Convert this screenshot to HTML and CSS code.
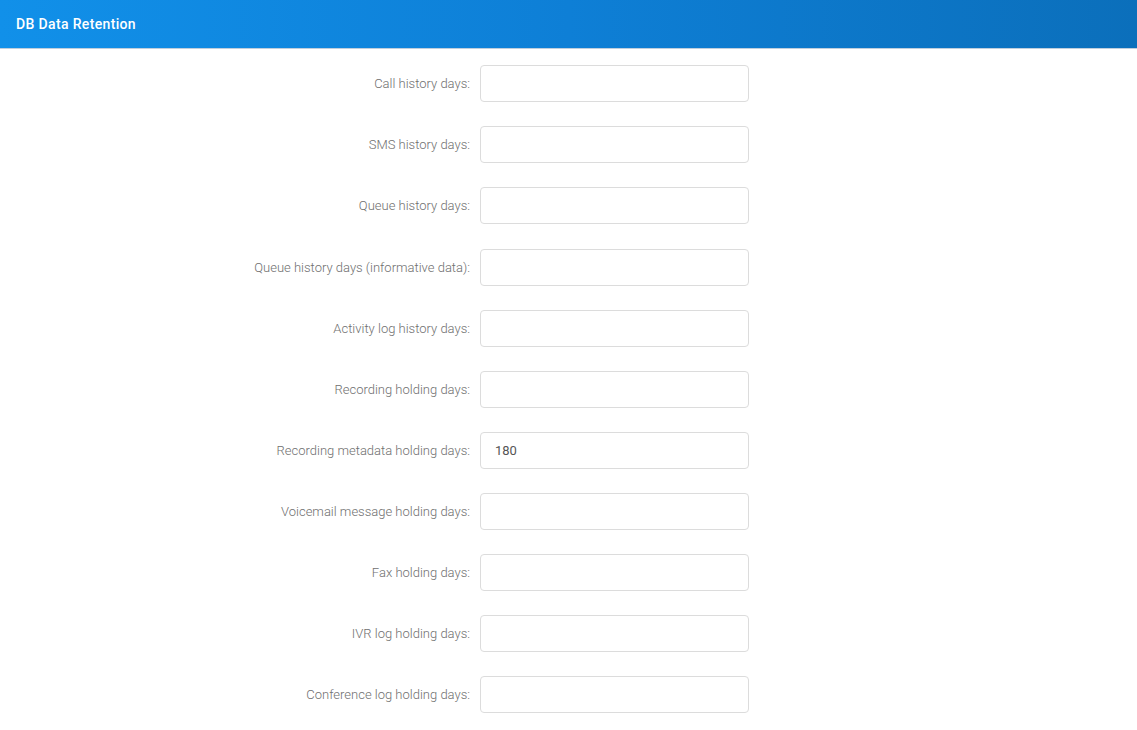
FILE: index.html
```html
<!DOCTYPE html>
<html lang="en">
<head>
<meta charset="utf-8">
<title>DB Data Retention</title>
<link rel="stylesheet" href="styles.css">
</head>
<body>
<header class="panel-header">
  <h1 class="panel-title">DB Data Retention</h1>
</header>
<form class="retention-form">
  <label class="field-label" for="f-call">Call history days:</label>
  <input class="field-input" id="f-call" type="text">

  <label class="field-label" for="f-sms">SMS history days:</label>
  <input class="field-input" id="f-sms" type="text">

  <label class="field-label" for="f-queue">Queue history days:</label>
  <input class="field-input" id="f-queue" type="text">

  <label class="field-label" for="f-queue-info">Queue history days (informative data):</label>
  <input class="field-input" id="f-queue-info" type="text">

  <label class="field-label" for="f-activity">Activity log history days:</label>
  <input class="field-input" id="f-activity" type="text">

  <label class="field-label" for="f-rec">Recording holding days:</label>
  <input class="field-input" id="f-rec" type="text">

  <label class="field-label" for="f-rec-meta">Recording metadata holding days:</label>
  <input class="field-input" id="f-rec-meta" type="text" value="180">

  <label class="field-label" for="f-vm">Voicemail message holding days:</label>
  <input class="field-input" id="f-vm" type="text">

  <label class="field-label" for="f-fax">Fax holding days:</label>
  <input class="field-input" id="f-fax" type="text">

  <label class="field-label" for="f-ivr">IVR log holding days:</label>
  <input class="field-input" id="f-ivr" type="text">

  <label class="field-label" for="f-conf">Conference log holding days:</label>
  <input class="field-input" id="f-conf" type="text">
</form>
</body>
</html>
```

FILE: styles.css
```css
html, body {
  margin: 0;
  padding: 0;
  background: #ffffff;
  font-family: Roboto, "Liberation Sans", Arial, sans-serif;
}

.panel-header {
  height: 48px;
  display: flex;
  align-items: center;
  padding: 0 16px;
  background: linear-gradient(90deg, #1190e9 0%, #0e7fd6 50%, #0b6fbb 100%);
  box-shadow: 0 1px 0 rgba(0, 60, 120, 0.25);
}

.panel-title {
  margin: 0;
  font-size: 14px;
  font-weight: 500;
  color: #ffffff;
  letter-spacing: 0.35px;
}

.retention-form {
  display: grid;
  grid-template-columns: 470px 269px;
  column-gap: 10px;
  row-gap: 24.1px;
  padding-top: 17.3px;
  align-items: center;
}

.field-label {
  text-align: right;
  font-size: 13px;
  font-weight: 300;
  color: #6f6f6f;
}

.field-input {
  box-sizing: border-box;
  width: 269px;
  height: 37px;
  margin: 0;
  padding: 0 14px;
  border: 1px solid #dcdcdc;
  border-radius: 4px;
  background: #ffffff;
  font-family: Roboto, "Liberation Sans", Arial, sans-serif;
  font-size: 13px;
  color: #555555;
  outline: none;
}
```
